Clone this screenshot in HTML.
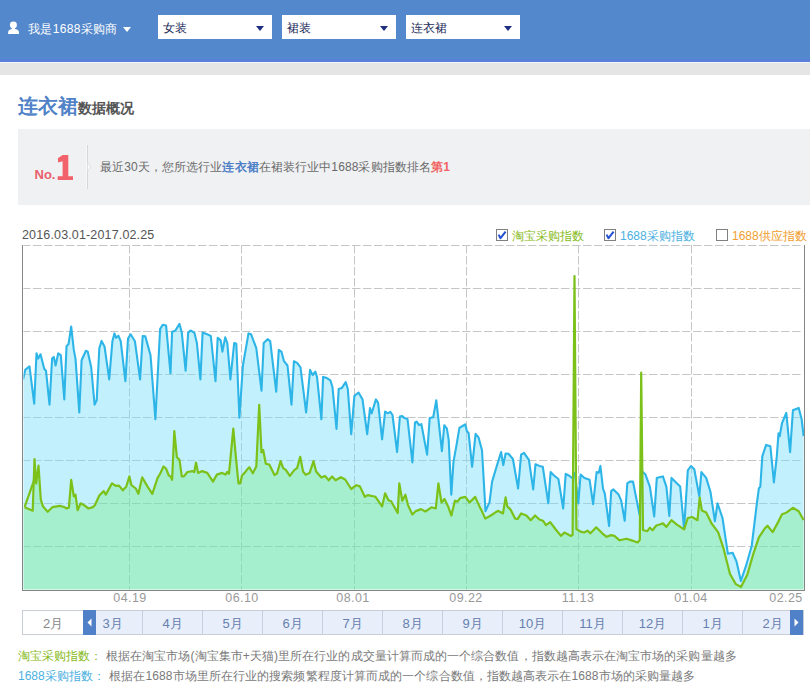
<!DOCTYPE html>
<html><head><meta charset="utf-8">
<style>
*{margin:0;padding:0;box-sizing:border-box}
html,body{width:810px;height:692px;overflow:hidden;background:#fff;font-family:"Liberation Sans",sans-serif;font-size:12px;color:#555}
.abs{position:absolute}
#hdr{position:absolute;left:0;top:0;width:810px;height:62px;background:#5488cc;border-bottom:3px solid #5a80dc}
#band{position:absolute;left:0;top:62px;width:810px;height:13px;background:#e5e5e5;border-top:1px solid #eef6fa}
.user{position:absolute;left:28px;top:20.5px;color:#fff;font-size:12px;letter-spacing:0.35px;line-height:16px;white-space:nowrap}
.tri-w{position:absolute;left:122.5px;top:26.5px;width:0;height:0;border-left:4.5px solid transparent;border-right:4.5px solid transparent;border-top:5px solid #fff}
.dd{position:absolute;top:15px;width:114px;height:24px;background:#fff}
.dd span{position:absolute;left:5px;top:5px;font-size:12px;line-height:16px;color:#1c2b5a}
.dd i{position:absolute;left:98px;top:11px;width:0;height:0;border-left:4.5px solid transparent;border-right:4.5px solid transparent;border-top:5px solid #1f2f80}
.title{position:absolute;left:18px;top:93px;white-space:nowrap}
.title b{font-size:20px;color:#5082c8;font-weight:bold;line-height:26px}
.title em{font-style:normal;font-size:14px;color:#555;font-weight:bold}
#nobox{position:absolute;left:18px;top:129px;width:792px;height:76px;background:#f0f1f3}

.nobig{position:absolute;left:34px;top:150px;color:#f06464;white-space:nowrap;font-weight:bold}
.vsep{position:absolute;left:87px;top:145px;width:1px;height:44px;background:#d6d6d6}
.msg{position:absolute;left:100px;top:159px;letter-spacing:0.1px;font-size:12px;line-height:16px;color:#6a6a6a;white-space:nowrap}
.msg b{color:#4e7fc6}
.msg em{font-style:normal;color:#f06464;font-weight:bold}
.date{position:absolute;left:22px;top:227px;font-size:12.5px;letter-spacing:0.15px;line-height:16px;color:#555}
.lg{position:absolute;top:228px;font-size:12px;line-height:16px;white-space:nowrap}
.xl{position:absolute;top:590px;margin-left:1px;font-size:12.5px;letter-spacing:0.45px;line-height:16px;color:#999;width:60px;text-align:center}
#slider{position:absolute;left:22px;top:610px;width:782px;height:25px;border:1px solid #c9ced6;background:#fff}
.cell{position:absolute;top:0;height:23px;width:60px;text-align:center;font-size:13px;line-height:26px;color:#6680b0;background:#e8effa;border-right:1px solid #c5cfdd}
.hdl{position:absolute;top:-1px;width:13px;height:25px;background:#4f80c8}
.foot{position:absolute;left:18px;font-size:12px;line-height:16px;color:#7a7a7a;white-space:nowrap}
</style></head><body>
<div id="hdr"></div>
<div id="band"></div>
<svg class="abs" style="left:4px;top:18px" width="20" height="20" viewBox="0 0 20 20"><ellipse cx="9.4" cy="7" rx="3.5" ry="3.4" fill="#fff"/><rect x="7.9" y="9" width="3" height="3.5" fill="#fff"/><path d="M4 16 L4.4 13 Q5.2 11.4 7.5 11.1 L9.4 11.8 L11.5 11.1 Q13.9 11.4 14.7 13 L15.1 16 Z" fill="#fff"/></svg>
<div class="user">我是1688采购商</div>
<div class="tri-w"></div>
<div class="dd" style="left:158px"><span>女装</span><i></i></div>
<div class="dd" style="left:282px"><span>裙装</span><i></i></div>
<div class="dd" style="left:406px"><span>连衣裙</span><i></i></div>

<div class="title"><b>连衣裙</b><em>数据概况</em></div>
<div id="nobox"></div>

<div class="nobig"><span style="font-size:13px;letter-spacing:0px;position:absolute;left:0.5px;top:17.3px;color:#e8606c">No.</span></div>
<svg class="abs" style="left:0;top:0" width="90" height="200"><path d="M62.6 155 L68.3 155 L68.3 176.3 L73 176.3 L73 180 L57.7 180 L57.7 176.3 L62.6 176.3 L62.6 161.3 L58.1 162.6 L57.9 158.3 Z" fill="#f2626a"/></svg>
<div class="vsep"></div>
<svg class="abs" style="left:0;top:0" width="100" height="200"><rect x="86" y="145" width="1" height="44" fill="#f8f8f9"/><path d="M87.5 162.5 L91 167 L87.5 171.5 Z" fill="#f9f9fa" stroke="#dcdcdc" stroke-width="0.8"/></svg>
<div class="msg">最近30天，您所选行业<b>连衣裙</b>在裙装行业中1688采购指数排名<em>第1</em></div>
<div class="date">2016.03.01-2017.02.25</div>
<svg class="abs" style="left:496px;top:229px" width="13" height="13" viewBox="0 0 13 13"><rect x="0.5" y="0.5" width="11" height="11" fill="#fff" stroke="#808080"/><path d="M2.6 5.6 L4.5 9.2 L9.6 2.6" fill="none" stroke="#2550d0" stroke-width="2" stroke-linejoin="round"/></svg>
<div class="lg" style="left:512px;color:#88bb22">淘宝采购指数</div>
<svg class="abs" style="left:604px;top:229px" width="13" height="13" viewBox="0 0 13 13"><rect x="0.5" y="0.5" width="11" height="11" fill="#fff" stroke="#808080"/><path d="M2.6 5.6 L4.5 9.2 L9.6 2.6" fill="none" stroke="#2550d0" stroke-width="2" stroke-linejoin="round"/></svg>
<div class="lg" style="left:620px;color:#4ab0e0">1688采购指数</div>
<svg class="abs" style="left:716px;top:229px" width="13" height="13" viewBox="0 0 13 13"><rect x="0.5" y="0.5" width="11" height="11" fill="#fff" stroke="#808080"/></svg>
<div class="lg" style="left:732px;color:#f0a030">1688供应指数</div>
<!--CHART--><svg class="abs" style="left:0;top:0" width="810" height="692" viewBox="0 0 810 692">
<rect x="22" y="245" width="783" height="345" fill="#fff"/>
<g stroke="#c6c6c6" stroke-width="1" stroke-dasharray="8.5,2.5" fill="none"><line x1="22" y1="245.5" x2="801" y2="245.5"/><line x1="22" y1="288.5" x2="801" y2="288.5"/><line x1="22" y1="331.5" x2="801" y2="331.5"/><line x1="22" y1="374.5" x2="801" y2="374.5"/><line x1="22" y1="417.5" x2="801" y2="417.5"/><line x1="22" y1="460.5" x2="801" y2="460.5"/><line x1="22" y1="503.5" x2="801" y2="503.5"/><line x1="22" y1="546.5" x2="801" y2="546.5"/><line x1="129.5" y1="245" x2="129.5" y2="590"/><line x1="241.5" y1="245" x2="241.5" y2="590"/><line x1="354.5" y1="245" x2="354.5" y2="590"/><line x1="466.5" y1="245" x2="466.5" y2="590"/><line x1="578.5" y1="245" x2="578.5" y2="590"/><line x1="691.5" y1="245" x2="691.5" y2="590"/></g>
<polygon points="23,590.5 23,379.4 23.1,379.4 25.2,369.9 29.5,366.4 34.2,403.7 36.5,353.4 38.2,358.6 40.5,354.3 44.3,369.0 46.0,370.7 49.5,404.6 52.1,358.6 53.8,356.9 55.6,365.5 58.2,353.4 60.8,355.1 64.3,399.4 66.5,346.4 68.6,343.8 71.2,326.5 73.8,349.9 75.5,358.6 79.3,412.4 81.6,360.3 85.9,350.8 87.7,351.6 91.2,367.3 94.6,404.6 96.7,400.2 99.3,348.2 101.6,340.9 104.5,346.4 109.2,379.4 112.4,341.2 114.4,333.4 116.2,337.8 118.4,335.7 120.7,341.2 125.4,381.1 128.0,338.6 130.6,334.3 134.9,341.2 140.1,379.4 142.7,336.0 145.3,336.4 150.5,355.1 155.4,419.3 160.1,329.1 162.7,324.8 166.1,325.6 170.5,373.3 172.1,331.7 175.2,330.8 179.5,323.9 181.8,332.6 185.6,370.7 188.2,332.6 190.5,330.5 194.3,332.6 196.9,343.0 200.4,379.4 202.6,332.6 206.4,333.9 210.8,336.0 215.5,381.1 217.7,337.8 220.7,340.4 222.4,351.6 225.2,337.4 227.3,343.0 230.4,379.4 234.2,343.0 236.3,343.8 239.4,417.6 242.9,365.5 248.5,333.4 251.1,334.3 256.3,348.2 261.5,390.7 263.7,343.0 267.6,339.2 270.2,341.2 276.2,391.6 278.8,349.9 281.4,351.6 284.0,361.2 287.5,365.5 291.5,404.6 293.9,361.2 297.1,362.9 300.5,367.3 306.1,412.4 310.1,369.9 312.7,375.1 315.3,371.6 317.0,376.8 321.4,419.3 323.1,376.9 326.1,377.7 330.4,380.3 332.5,387.3 336.5,428.9 338.7,389.0 341.7,388.1 345.7,382.1 347.8,389.0 351.2,434.1 354.4,395.9 356.4,394.2 358.5,392.5 362.5,399.4 367.2,434.1 370.0,408.1 371.7,413.3 375.9,399.4 378.1,402.9 382.1,439.3 385.1,411.6 387.7,413.3 390.3,411.9 392.5,415.0 397.1,452.0 399.9,416.4 401.9,415.9 404.5,418.1 407.5,419.0 412.4,462.4 415.0,422.5 416.7,421.6 419.0,425.1 421.4,424.2 427.1,454.6 429.7,418.1 433.2,417.3 436.3,400.3 438.0,415.5 441.9,451.1 444.3,425.2 446.9,428.6 448.7,439.9 451.3,494.6 453.5,461.6 456.5,445.1 459.4,427.8 462.6,426.0 465.2,424.3 466.9,431.2 468.6,433.0 472.1,466.8 475.6,433.8 478.5,437.3 482.0,450.3 485.5,511.1 489.5,502.4 492.1,481.6 497.3,464.2 501.1,452.1 503.3,465.1 505.6,453.5 508.5,453.8 512.9,459.0 518.1,488.5 521.1,454.7 524.0,452.9 528.9,459.9 533.2,489.4 535.5,464.2 539.3,465.9 542.8,466.8 548.3,503.3 550.6,472.0 554.0,475.5 558.4,479.0 563.2,508.5 565.7,473.8 568.8,475.5 572.3,478.1 574.9,472.9 578.3,503.3 580.6,474.6 584.4,478.1 589.6,479.8 593.1,504.1 596.6,472.0 598.7,472.9 600.4,465.9 603.0,488.5 604.8,493.7 609.1,526.0 611.2,491.1 613.4,489.4 618.6,494.6 621.2,500.7 624.7,520.8 627.3,483.3 629.9,481.6 633.0,481.6 639.5,514.5 641.7,471.1 645.5,474.6 649.9,486.8 654.2,516.4 656.8,478.1 659.4,477.2 662.9,476.4 666.4,486.8 669.3,515.9 671.5,477.9 675.8,482.3 680.2,486.6 684.1,528.9 687.8,470.4 691.0,466.0 694.3,469.3 699.3,496.4 701.4,472.1 706.2,477.9 710.5,492.0 714.9,521.3 717.5,503.3 722.5,518.0 727.9,553.8 732.6,552.7 736.5,561.4 740.9,580.9 745.9,566.2 751.7,546.0 756.6,505.5 758.9,488.2 760.3,486.8 762.3,456.4 766.1,444.9 770.4,446.3 773.9,482.4 776.8,456.4 778.5,433.3 779.7,436.2 782.0,423.2 786.3,412.9 790.1,452.1 792.9,410.2 798.7,407.9 801.6,418.9 803.6,436.2 803.6,590.5" fill="rgb(119,224,251)" fill-opacity="0.45"/>
<polygon points="23,590.5 23,507.2 24.6,507.2 32.7,510.7 34.5,459.2 36.2,483.5 38.5,465.6 40.8,499.7 43.1,506.6 47.7,511.8 52.4,507.2 59.9,505.9 63.4,506.8 66.9,508.5 68.9,507.6 71.2,479.9 73.8,496.4 75.5,494.6 77.6,510.2 80.7,503.3 83.3,504.7 88.5,508.5 92.9,507.1 95.0,505.0 99.3,495.5 103.7,491.1 105.8,494.6 112.0,483.3 115.8,485.9 119.0,485.6 122.8,490.3 126.2,486.8 129.4,476.4 131.4,485.1 135.8,488.5 138.4,493.8 142.2,477.3 147.1,485.9 152.3,493.8 157.5,478.1 160.1,473.8 163.5,466.5 166.1,468.6 168.8,475.5 170.5,476.4 172.1,479.8 174.3,431.2 176.9,457.3 179.5,459.9 181.8,476.4 183.9,476.4 187.4,472.0 192.6,471.1 194.3,472.0 196.0,462.5 198.1,472.9 202.1,471.1 207.3,472.9 213.0,481.6 216.9,474.6 222.1,472.9 225.5,474.6 227.3,472.0 229.0,473.8 233.3,428.6 235.9,457.3 238.5,483.3 240.3,483.3 242.0,475.5 244.6,472.9 247.2,469.4 249.3,467.2 252.8,473.3 256.3,466.4 259.2,404.8 261.5,452.5 263.2,449.9 265.8,463.8 269.3,464.6 274.5,475.0 277.1,473.3 280.6,461.1 283.2,468.1 285.8,469.8 289.8,475.9 294.5,469.8 297.1,468.1 300.2,456.8 303.1,471.6 305.7,474.7 309.6,473.0 313.5,461.1 316.1,471.6 321.4,477.6 325.0,475.9 328.7,480.3 332.1,476.5 335.6,480.3 340.8,477.2 345.2,479.5 351.2,489.0 356.4,485.2 359.9,486.4 364.8,496.8 367.7,495.1 375.5,496.8 382.1,506.4 385.1,493.3 388.5,500.3 391.1,501.2 397.7,513.0 399.3,483.4 402.3,500.7 405.4,494.7 408.0,505.1 412.4,514.6 415.8,511.1 421.0,509.1 425.4,511.5 431.4,507.3 435.8,508.5 438.4,483.4 441.5,502.5 444.5,499.0 447.9,505.9 451.4,515.5 454.9,500.7 457.5,501.6 460.1,498.1 465.3,496.9 469.6,502.5 475.2,496.9 479.5,506.4 482.1,511.6 485.3,518.6 490.8,515.5 497.8,510.8 503.0,513.4 505.6,497.4 507.3,506.4 510.8,509.9 515.1,518.6 517.7,518.9 521.2,513.4 526.4,515.5 530.7,520.3 535.1,515.5 539.4,519.5 542.9,520.7 546.0,525.2 550.2,522.1 555.4,529.0 561.0,535.9 564.4,532.5 571.0,535.9 572.6,535.0 574.5,276.0 576.4,529.0 580.6,531.6 584.0,532.5 587.5,530.7 590.5,533.3 596.2,527.3 602.3,533.3 606.6,536.8 611.0,535.1 614.4,535.9 619.6,540.3 626.4,538.7 631.6,540.4 637.7,542.5 639.8,539.9 641.2,372.5 643.0,530.0 647.3,531.2 649.9,527.7 652.5,530.3 656.3,525.5 660.3,524.3 662.9,523.4 666.4,526.9 671.5,520.2 676.9,524.6 684.1,529.3 687.8,518.0 692.1,517.0 697.5,520.2 699.7,497.5 701.9,510.5 706.2,512.6 711.6,523.5 718.1,532.1 723.5,548.4 730.0,574.0 735.8,584.1 741.0,587.0 747.3,574.8 753.1,554.6 758.9,537.3 764.7,528.6 767.5,525.7 772.7,532.1 777.7,522.9 782.0,514.2 786.3,512.7 792.9,507.8 798.7,511.3 803.6,520.0 803.6,590.5" fill="rgb(90,234,83)" fill-opacity="0.27"/>
<polyline points="23.1,379.4 25.2,369.9 29.5,366.4 34.2,403.7 36.5,353.4 38.2,358.6 40.5,354.3 44.3,369.0 46.0,370.7 49.5,404.6 52.1,358.6 53.8,356.9 55.6,365.5 58.2,353.4 60.8,355.1 64.3,399.4 66.5,346.4 68.6,343.8 71.2,326.5 73.8,349.9 75.5,358.6 79.3,412.4 81.6,360.3 85.9,350.8 87.7,351.6 91.2,367.3 94.6,404.6 96.7,400.2 99.3,348.2 101.6,340.9 104.5,346.4 109.2,379.4 112.4,341.2 114.4,333.4 116.2,337.8 118.4,335.7 120.7,341.2 125.4,381.1 128.0,338.6 130.6,334.3 134.9,341.2 140.1,379.4 142.7,336.0 145.3,336.4 150.5,355.1 155.4,419.3 160.1,329.1 162.7,324.8 166.1,325.6 170.5,373.3 172.1,331.7 175.2,330.8 179.5,323.9 181.8,332.6 185.6,370.7 188.2,332.6 190.5,330.5 194.3,332.6 196.9,343.0 200.4,379.4 202.6,332.6 206.4,333.9 210.8,336.0 215.5,381.1 217.7,337.8 220.7,340.4 222.4,351.6 225.2,337.4 227.3,343.0 230.4,379.4 234.2,343.0 236.3,343.8 239.4,417.6 242.9,365.5 248.5,333.4 251.1,334.3 256.3,348.2 261.5,390.7 263.7,343.0 267.6,339.2 270.2,341.2 276.2,391.6 278.8,349.9 281.4,351.6 284.0,361.2 287.5,365.5 291.5,404.6 293.9,361.2 297.1,362.9 300.5,367.3 306.1,412.4 310.1,369.9 312.7,375.1 315.3,371.6 317.0,376.8 321.4,419.3 323.1,376.9 326.1,377.7 330.4,380.3 332.5,387.3 336.5,428.9 338.7,389.0 341.7,388.1 345.7,382.1 347.8,389.0 351.2,434.1 354.4,395.9 356.4,394.2 358.5,392.5 362.5,399.4 367.2,434.1 370.0,408.1 371.7,413.3 375.9,399.4 378.1,402.9 382.1,439.3 385.1,411.6 387.7,413.3 390.3,411.9 392.5,415.0 397.1,452.0 399.9,416.4 401.9,415.9 404.5,418.1 407.5,419.0 412.4,462.4 415.0,422.5 416.7,421.6 419.0,425.1 421.4,424.2 427.1,454.6 429.7,418.1 433.2,417.3 436.3,400.3 438.0,415.5 441.9,451.1 444.3,425.2 446.9,428.6 448.7,439.9 451.3,494.6 453.5,461.6 456.5,445.1 459.4,427.8 462.6,426.0 465.2,424.3 466.9,431.2 468.6,433.0 472.1,466.8 475.6,433.8 478.5,437.3 482.0,450.3 485.5,511.1 489.5,502.4 492.1,481.6 497.3,464.2 501.1,452.1 503.3,465.1 505.6,453.5 508.5,453.8 512.9,459.0 518.1,488.5 521.1,454.7 524.0,452.9 528.9,459.9 533.2,489.4 535.5,464.2 539.3,465.9 542.8,466.8 548.3,503.3 550.6,472.0 554.0,475.5 558.4,479.0 563.2,508.5 565.7,473.8 568.8,475.5 572.3,478.1 574.9,472.9 578.3,503.3 580.6,474.6 584.4,478.1 589.6,479.8 593.1,504.1 596.6,472.0 598.7,472.9 600.4,465.9 603.0,488.5 604.8,493.7 609.1,526.0 611.2,491.1 613.4,489.4 618.6,494.6 621.2,500.7 624.7,520.8 627.3,483.3 629.9,481.6 633.0,481.6 639.5,514.5 641.7,471.1 645.5,474.6 649.9,486.8 654.2,516.4 656.8,478.1 659.4,477.2 662.9,476.4 666.4,486.8 669.3,515.9 671.5,477.9 675.8,482.3 680.2,486.6 684.1,528.9 687.8,470.4 691.0,466.0 694.3,469.3 699.3,496.4 701.4,472.1 706.2,477.9 710.5,492.0 714.9,521.3 717.5,503.3 722.5,518.0 727.9,553.8 732.6,552.7 736.5,561.4 740.9,580.9 745.9,566.2 751.7,546.0 756.6,505.5 758.9,488.2 760.3,486.8 762.3,456.4 766.1,444.9 770.4,446.3 773.9,482.4 776.8,456.4 778.5,433.3 779.7,436.2 782.0,423.2 786.3,412.9 790.1,452.1 792.9,410.2 798.7,407.9 801.6,418.9 803.6,436.2" fill="none" stroke="#2db5e8" stroke-width="2.1" stroke-linejoin="round"/>
<polyline points="24.6,507.2 32.7,510.7 34.5,459.2 36.2,483.5 38.5,465.6 40.8,499.7 43.1,506.6 47.7,511.8 52.4,507.2 59.9,505.9 63.4,506.8 66.9,508.5 68.9,507.6 71.2,479.9 73.8,496.4 75.5,494.6 77.6,510.2 80.7,503.3 83.3,504.7 88.5,508.5 92.9,507.1 95.0,505.0 99.3,495.5 103.7,491.1 105.8,494.6 112.0,483.3 115.8,485.9 119.0,485.6 122.8,490.3 126.2,486.8 129.4,476.4 131.4,485.1 135.8,488.5 138.4,493.8 142.2,477.3 147.1,485.9 152.3,493.8 157.5,478.1 160.1,473.8 163.5,466.5 166.1,468.6 168.8,475.5 170.5,476.4 172.1,479.8 174.3,431.2 176.9,457.3 179.5,459.9 181.8,476.4 183.9,476.4 187.4,472.0 192.6,471.1 194.3,472.0 196.0,462.5 198.1,472.9 202.1,471.1 207.3,472.9 213.0,481.6 216.9,474.6 222.1,472.9 225.5,474.6 227.3,472.0 229.0,473.8 233.3,428.6 235.9,457.3 238.5,483.3 240.3,483.3 242.0,475.5 244.6,472.9 247.2,469.4 249.3,467.2 252.8,473.3 256.3,466.4 259.2,404.8 261.5,452.5 263.2,449.9 265.8,463.8 269.3,464.6 274.5,475.0 277.1,473.3 280.6,461.1 283.2,468.1 285.8,469.8 289.8,475.9 294.5,469.8 297.1,468.1 300.2,456.8 303.1,471.6 305.7,474.7 309.6,473.0 313.5,461.1 316.1,471.6 321.4,477.6 325.0,475.9 328.7,480.3 332.1,476.5 335.6,480.3 340.8,477.2 345.2,479.5 351.2,489.0 356.4,485.2 359.9,486.4 364.8,496.8 367.7,495.1 375.5,496.8 382.1,506.4 385.1,493.3 388.5,500.3 391.1,501.2 397.7,513.0 399.3,483.4 402.3,500.7 405.4,494.7 408.0,505.1 412.4,514.6 415.8,511.1 421.0,509.1 425.4,511.5 431.4,507.3 435.8,508.5 438.4,483.4 441.5,502.5 444.5,499.0 447.9,505.9 451.4,515.5 454.9,500.7 457.5,501.6 460.1,498.1 465.3,496.9 469.6,502.5 475.2,496.9 479.5,506.4 482.1,511.6 485.3,518.6 490.8,515.5 497.8,510.8 503.0,513.4 505.6,497.4 507.3,506.4 510.8,509.9 515.1,518.6 517.7,518.9 521.2,513.4 526.4,515.5 530.7,520.3 535.1,515.5 539.4,519.5 542.9,520.7 546.0,525.2 550.2,522.1 555.4,529.0 561.0,535.9 564.4,532.5 571.0,535.9 572.6,535.0 574.5,276.0 576.4,529.0 580.6,531.6 584.0,532.5 587.5,530.7 590.5,533.3 596.2,527.3 602.3,533.3 606.6,536.8 611.0,535.1 614.4,535.9 619.6,540.3 626.4,538.7 631.6,540.4 637.7,542.5 639.8,539.9 641.2,372.5 643.0,530.0 647.3,531.2 649.9,527.7 652.5,530.3 656.3,525.5 660.3,524.3 662.9,523.4 666.4,526.9 671.5,520.2 676.9,524.6 684.1,529.3 687.8,518.0 692.1,517.0 697.5,520.2 699.7,497.5 701.9,510.5 706.2,512.6 711.6,523.5 718.1,532.1 723.5,548.4 730.0,574.0 735.8,584.1 741.0,587.0 747.3,574.8 753.1,554.6 758.9,537.3 764.7,528.6 767.5,525.7 772.7,532.1 777.7,522.9 782.0,514.2 786.3,512.7 792.9,507.8 798.7,511.3 803.6,520.0" fill="none" stroke="#7cc119" stroke-width="2.2" stroke-linejoin="round"/>
<line x1="24.6" y1="507.2" x2="35" y2="477.7" stroke="#7cc119" stroke-width="2.2"/>
<line x1="23.5" y1="245" x2="23.5" y2="589.5" stroke="#fff" stroke-opacity="0.45" stroke-width="1"/>
<line x1="23" y1="589.5" x2="804" y2="589.5" stroke="#fff" stroke-opacity="0.5" stroke-width="1"/>
<line x1="22.5" y1="245" x2="22.5" y2="590" stroke="#858585" stroke-width="1"/>
<line x1="804.5" y1="245" x2="804.5" y2="590" stroke="#858585" stroke-width="1"/>
<line x1="22" y1="590.5" x2="805" y2="590.5" stroke="#858585" stroke-width="1"/>
</svg><!--/CHART-->
<div class="xl" style="left:99px">04.19</div>
<div class="xl" style="left:211px">06.10</div>
<div class="xl" style="left:322px">08.01</div>
<div class="xl" style="left:435px">09.22</div>
<div class="xl" style="left:547px">11.13</div>
<div class="xl" style="left:660px">01.04</div>
<div class="xl" style="left:755px">02.25</div>
<div id="slider">
<div class="cell" style="left:0;width:60px;background:#fff;border-right:none;color:#888">2月</div>
<div class="cell" style="left:60px">3月</div>
<div class="cell" style="left:120px">4月</div>
<div class="cell" style="left:180px">5月</div>
<div class="cell" style="left:240px">6月</div>
<div class="cell" style="left:300px">7月</div>
<div class="cell" style="left:360px">8月</div>
<div class="cell" style="left:420px">9月</div>
<div class="cell" style="left:480px">10月</div>
<div class="cell" style="left:540px">11月</div>
<div class="cell" style="left:600px">12月</div>
<div class="cell" style="left:660px">1月</div>
<div class="cell" style="left:720px">2月</div>
<div class="hdl" style="left:60px"><svg width="13" height="25"><path d="M4.5 12.5 L8.5 8.5 L8.5 16.5Z" fill="#fff"/></svg></div>
<div class="hdl" style="left:767px"><svg width="13" height="25"><path d="M8.5 12.5 L4.5 8.5 L4.5 16.5Z" fill="#fff"/></svg></div>
</div>
<div class="foot" style="top:648px"><span style="color:#88bb22">淘宝采购指数：</span><span style="margin-left:4px;letter-spacing:0.07px">根据在淘宝市场(淘宝集市+天猫)里所在行业的成交量计算而成的一个综合数值，指数越高表示在淘宝市场的采购量越多</span></div>
<div class="foot" style="top:668px"><span style="color:#4ab0e0">1688采购指数：</span><span style="margin-left:4.5px;letter-spacing:0.09px">根据在1688市场里所在行业的搜索频繁程度计算而成的一个综合数值，指数越高表示在1688市场的采购量越多</span></div>
</body></html>
